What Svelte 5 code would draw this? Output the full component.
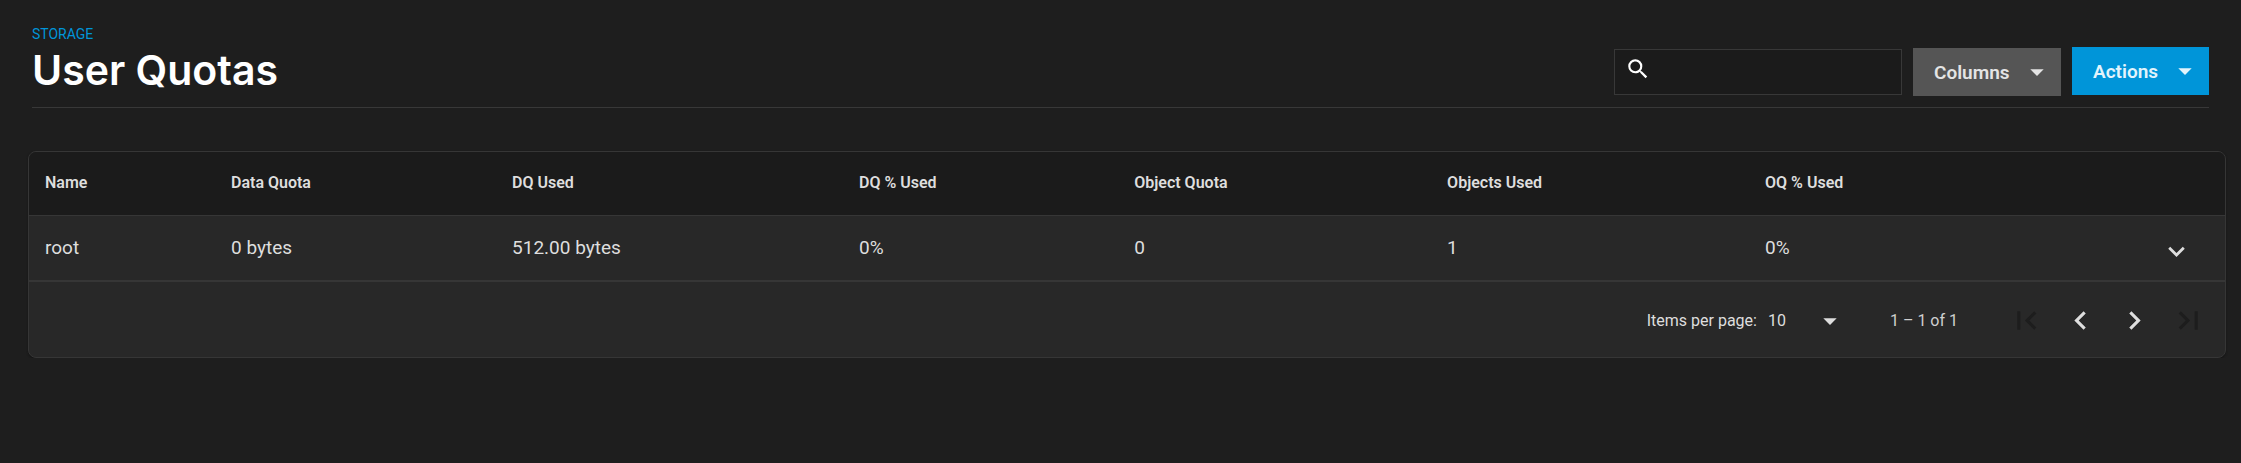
<script>
  const columns = ['Name', 'Data Quota', 'DQ Used', 'DQ % Used', 'Object Quota', 'Objects Used', 'OQ % Used'];
  const rows = [['root', '0 bytes', '512.00 bytes', '0%', '0', '1', '0%']];
  const pagerButtons = [
    { label: 'First page', disabled: true, path: 'M18.41 16.59L13.82 12l4.59-4.59L17 6l-6 6 6 6zM6 6h2v12H6z' },
    { label: 'Previous page', disabled: false, path: 'M15.41 7.41L14 6l-6 6 6 6 1.41-1.41L10.83 12z' },
    { label: 'Next page', disabled: false, path: 'M10 6L8.59 7.41 13.17 12l-4.58 4.59L10 18l6-6z' },
    { label: 'Last page', disabled: true, path: 'M5.59 7.41L10.18 12l-4.59 4.59L7 18l6-6-6-6zM16 6h2v12h-2z' }
  ];
  let search = $state('');
  let pageSize = $state('10');
</script>

<main>
  <header>
    <div class="heading">
      <p>STORAGE</p>
      <h1>User Quotas</h1>
    </div>
    <div class="tools">
      <div class="filters">
        <label class="search">
          <svg viewBox="0 0 24 24" aria-hidden="true"><path d="M15.5 14h-.79l-.28-.27A6.471 6.471 0 0 0 16 9.5 6.5 6.5 0 1 0 9.5 16c1.61 0 3.09-.59 4.23-1.57l.27.28v.79l5 4.99L20.49 19l-4.99-5zm-6 0C7.01 14 5 11.99 5 9.5S7.01 5 9.5 5 14 7.01 14 9.5 11.99 14 9.5 14z" /></svg>
          <input type="text" aria-label="Search" bind:value={search} />
        </label>
        <button class="menu columns" type="button">
          <span>Columns</span>
          <svg viewBox="0 0 24 24" aria-hidden="true"><path d="M7 10l5 5 5-5z" /></svg>
        </button>
      </div>
      <button class="menu actions" type="button">
        <span>Actions</span>
        <svg viewBox="0 0 24 24" aria-hidden="true"><path d="M7 10l5 5 5-5z" /></svg>
      </button>
    </div>
  </header>

  <section class="card">
    <table>
      <thead>
        <tr>
          {#each columns as column}
            <th scope="col">{column}</th>
          {/each}
          <th class="expand" aria-label="Details"></th>
        </tr>
      </thead>
      <tbody>
        {#each rows as row}
          <tr>
            {#each row as value}
              <td>{value}</td>
            {/each}
            <td class="expand">
              <button type="button" aria-label="Expand row">
                <svg viewBox="0 0 24 24" aria-hidden="true"><path d="M16.59 8.59L12 13.17 7.41 8.59 6 10l6 6 6-6z" /></svg>
              </button>
            </td>
          </tr>
        {/each}
      </tbody>
    </table>

    <footer>
      <label for="page-size">Items per page:</label>
      <div class="size">
        <select id="page-size" bind:value={pageSize}>
          <option>10</option>
          <option>50</option>
          <option>100</option>
        </select>
        <svg viewBox="0 0 24 24" aria-hidden="true"><path d="M7 10l5 5 5-5z" /></svg>
      </div>
      <span class="range">1 – 1 of 1</span>
      <nav aria-label="Pages">
        {#each pagerButtons as item}
          <button type="button" aria-label={item.label} disabled={item.disabled}>
            <svg viewBox="0 0 24 24" aria-hidden="true"><path d={item.path} /></svg>
          </button>
        {/each}
      </nav>
    </footer>
  </section>
</main>

<style>
  :global(body) {
    background: #1e1e1e;
  }
  main {
    box-sizing: border-box;
    padding: 24px 15px 0 28px;
    color: #dedede;
    font-family: Roboto, sans-serif;
    font-size: 16px;
  }
  svg {
    display: block;
    flex: none;
    fill: currentColor;
  }
  button {
    padding: 0;
    border: 0;
    background: none;
    color: inherit;
    font: inherit;
    cursor: pointer;
  }
  header {
    display: flex;
    justify-content: space-between;
    align-items: flex-end;
    margin: 0 17px 43px 4px;
    border-bottom: 1px solid #383838;
  }
  .heading p {
    margin: 0;
    color: #0095d9;
    font-size: 14px;
    line-height: 20px;
  }
  h1 {
    margin: 0 0 11px;
    color: #fff;
    font-family: Inter, sans-serif;
    font-size: 41px;
    font-weight: 600;
    line-height: 52px;
  }
  .tools {
    display: flex;
    align-items: flex-start;
    gap: 11px;
    height: 49px;
    margin-bottom: 11px;
  }
  .filters {
    display: flex;
    align-items: center;
    align-self: flex-end;
    gap: 11px;
  }
  .search {
    box-sizing: border-box;
    display: flex;
    gap: 8px;
    width: 288px;
    height: 46px;
    padding: 6px 10px;
    border: 1px solid #383838;
    background: #1b1b1b;
    color: #fff;
  }
  .search svg {
    width: 26px;
    height: 26px;
  }
  .search input {
    flex: 1;
    min-width: 0;
    padding: 0;
    border: 0;
    outline: 0;
    background: transparent;
    color: inherit;
    font: inherit;
  }
  .menu {
    display: flex;
    align-items: center;
    justify-content: space-between;
    height: 48px;
    padding: 0 8px 0 21px;
    color: #e4e4e4;
    font-size: 19px;
    font-weight: 600;
  }
  .menu svg {
    width: 32px;
    height: 32px;
  }
  .columns {
    width: 148px;
    background: #555;
  }
  .actions {
    width: 137px;
    background: #0095d9;
    color: #e3f4fc;
  }
  .card {
    overflow: hidden;
    border: 1px solid #363636;
    border-radius: 8px;
    background: #282828;
    box-shadow: 0 1px 2px #141414;
  }
  table {
    width: 100%;
    border-collapse: separate;
    border-spacing: 0;
    table-layout: fixed;
  }
  th,
  td {
    box-sizing: border-box;
    height: 64px;
    padding: 0 16px 2px;
    text-align: left;
  }
  th {
    border-bottom: 1px solid #363636;
    background: #1b1b1b;
    font-weight: 600;
  }
  td {
    font-size: 19px;
  }
  th:nth-child(1) { width: 8.47%; }
  th:nth-child(2) { width: 12.8%; }
  th:nth-child(3) { width: 15.8%; }
  th:nth-child(4) { width: 12.53%; }
  th:nth-child(5) { width: 14.25%; }
  th:nth-child(6) { width: 14.48%; }
  .expand button {
    display: block;
    margin: 8px 16px 0 auto;
  }
  .expand svg {
    width: 33px;
    height: 33px;
  }
  footer {
    display: flex;
    align-items: center;
    justify-content: flex-end;
    height: 73px;
    padding: 2px 10px 0 0;
    border-top: 2px solid #363636;
  }
  .size {
    display: grid;
    align-items: center;
    width: 78px;
    margin: 0 44px 0 11px;
  }
  .size select,
  .size svg {
    grid-area: 1 / 1;
  }
  .size select {
    width: 100%;
    padding: 0;
    border: 0;
    outline: 0;
    appearance: none;
    background: transparent;
    color: inherit;
    font: inherit;
  }
  .size svg {
    justify-self: end;
    width: 32px;
    height: 32px;
    pointer-events: none;
  }
  .range {
    color: #cfcfcf;
  }
  nav {
    display: flex;
    margin-left: 41px;
  }
  nav button {
    display: grid;
    place-items: center;
    width: 54px;
    height: 54px;
  }
  nav button:disabled {
    color: #1d1d1d;
    cursor: default;
  }
  nav svg {
    width: 37px;
    height: 37px;
  }
</style>
